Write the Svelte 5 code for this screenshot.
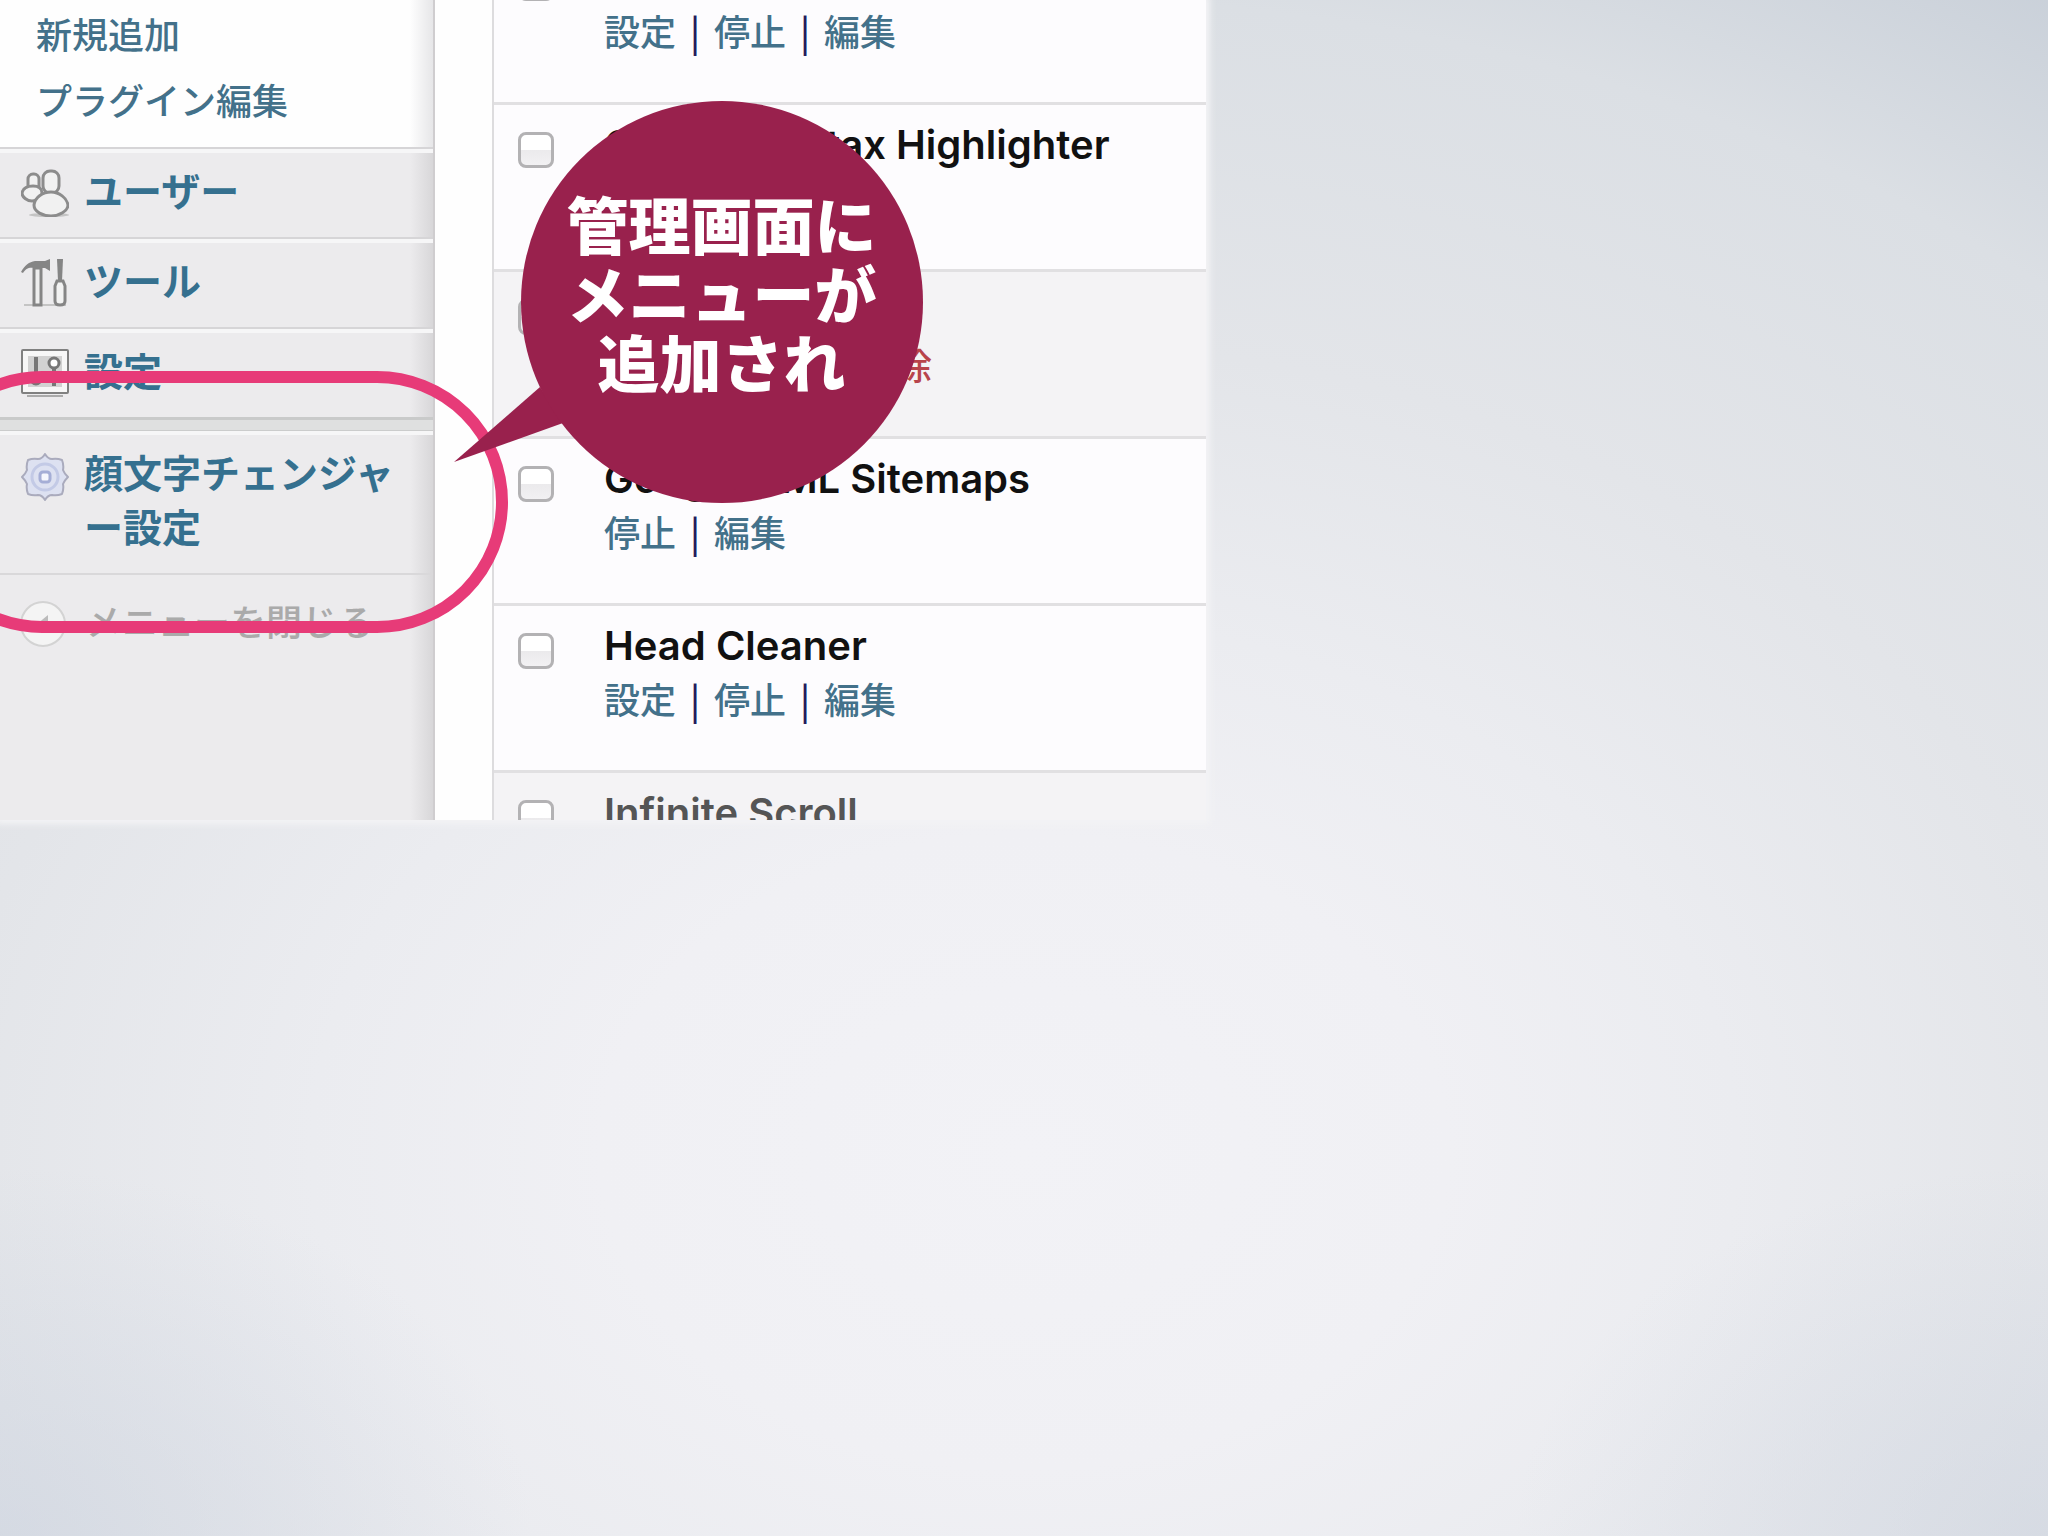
<script>
  const submenu = ['新規追加', 'プラグイン編集'];
  const menu = [
    { icon: 'users', label: 'ユーザー' },
    { icon: 'tools', label: 'ツール' },
    { icon: 'settings', label: '設定' }
  ];
  const plugins = [
    { name: '', active: true, actions: ['設定', '停止', '編集'] },
    { name: 'Google Syntax Highlighter', active: true, actions: [] },
    { name: '', active: false, actions: ['有効化', '編集', '削除'] },
    { name: 'Google XML Sitemaps', active: true, actions: ['停止', '編集'] },
    { name: 'Head Cleaner', active: true, actions: ['設定', '停止', '編集'] },
    { name: 'Infinite Scroll', active: false, actions: [] }
  ];
</script>

<main class="slide">
  <div class="screen">
    <nav class="sidebar">
      <div class="submenu">
        {#each submenu as item}<a href="#top">{item}</a>{/each}
      </div>
      {#each menu as item}
        <a class="item" href="#top">
          <svg class="icon" viewBox="0 0 48 48" aria-hidden="true">
            {#if item.icon === 'users'}
              <ellipse cx="28" cy="46" rx="20" ry="2" fill="#c4c4c4" />
              <g fill="#f1f1f1" stroke="#8c8c8c" stroke-width="3">
                <rect x="7" y="5" width="11" height="17" rx="5" />
                <path d="M1 24C2 19 6 17 12 17S21 20 21 24S16 32 11 32S1 28 1 24Z" />
                <rect x="22" y="2" width="16" height="22" rx="7" />
                <path d="M13 36C14 28 22 23 30 23S46 29 47 36C47 42 38 47 30 47S13 43 13 36Z" />
              </g>
            {:else if item.icon === 'tools'}
              <path d="M3 46H45" stroke="#c4c4c4" stroke-width="2" />
              <path d="M0 13C4 6 8 3 14 2H24L29 0V12L24 9H14C8 8 5 9 2 14Z" fill="#858585" />
              <path d="M13 9H20V46H13Z" fill="#eee" stroke="#858585" stroke-width="3" />
              <path d="M36 0H42L41 22H37Z" fill="#858585" />
              <path d="M36 22H42L44 27V42Q44 46 39 46T34 42V27Z" fill="#f2f2f2" stroke="#858585" stroke-width="3" />
            {:else}
              <path d="M6 47H42" stroke="#aaa" stroke-width="2" />
              <rect x="1" y="1" width="46" height="43" rx="1" fill="#f7f7f7" stroke="#808080" stroke-width="2" />
              <rect x="7" y="7" width="34" height="31" fill="#d2d2d2" />
              <path d="M15 8V35M33 18V37" stroke="#777" stroke-width="4" />
              <circle cx="33" cy="14" r="5" fill="#fff" stroke="#777" stroke-width="3" />
              <circle cx="15" cy="30" r="5" fill="#fff" stroke="#777" stroke-width="3" />
            {/if}
          </svg>
          <span>{item.label}</span>
        </a>
      {/each}
      <div class="divider"></div>
      <a class="item tall" href="#top">
        <svg class="icon" viewBox="0 0 48 48" aria-hidden="true">
          <path d="M24 1Q27 6 31 6Q36 5 41 7Q43 12 42 17Q43 20 47 24Q43 28 42 31Q43 36 41 41Q36 43 31 42Q27 42 24 47Q21 42 17 42Q12 43 7 41Q5 36 6 31Q5 28 1 24Q5 20 6 17Q5 12 7 7Q12 5 17 6Q21 6 24 1Z" fill="#dde1f1" stroke="#aaabbd" stroke-width="2" stroke-linejoin="round" />
          <circle cx="24" cy="24" r="13" fill="none" stroke="#c3cae6" stroke-width="3" />
          <rect x="19" y="19" width="10" height="10" rx="3" fill="#f6f7fd" stroke="#a5aed6" stroke-width="3" />
        </svg>
        <span>顔文字チェンジャー設定</span>
      </a>
      <button class="collapse" type="button">
        <svg class="icon" viewBox="0 0 48 48" aria-hidden="true">
          <circle cx="23" cy="24" r="22" fill="#f4f4f4" stroke="#d3d3d3" stroke-width="2" />
          <path d="M28 15V33L17 24Z" fill="#bbb" />
        </svg>
        <span>メニューを閉じる</span>
      </button>
    </nav>
    <div class="content">
      <table>
        <tbody>
          {#each plugins as plugin}
            <tr class:inactive={!plugin.active}>
              <td class="check"><input type="checkbox" aria-label={plugin.name || 'プラグインを選択'} /></td>
              <td class="info">
                <strong>{plugin.name}</strong>
                <div class="actions">
                  {#each plugin.actions as action, i}
                    {#if i > 0}<i>|</i>{/if}<a href="#top" class:delete={action === '削除'}>{action}</a>
                  {/each}
                </div>
              </td>
            </tr>
          {/each}
        </tbody>
      </table>
    </div>
  </div>

  <div class="ring"></div>
  <div class="callout">
    <svg viewBox="0 0 469 402" aria-hidden="true">
      <path d="M0 361L86 286L109 322Z" />
      <circle cx="268" cy="201" r="201" />
    </svg>
    <p>管理画面に<br />メニューが<br />追加され</p>
  </div>
</main>

<style>
  :global(body) { margin: 0; }
  .slide {
    position: relative;
    min-height: 100vh;
    overflow: hidden;
    font-family: 'Liberation Sans', 'Noto Sans CJK JP', sans-serif;
    background:
      radial-gradient(ellipse 26% 24% at 0% 100%, #ccd3df99, transparent),
      radial-gradient(ellipse 26% 24% at 100% 100%, #ccd3df88, transparent),
      radial-gradient(ellipse 94% 94% at 50% 75%, #f2f2f6 0%, #f0f0f4 22%, #ebecf0 37%, #e3e5e9 56%, #dbdfe4 80%, #c9d0d9 97%);
  }
  .screen {
    display: flex;
    width: 58.9%;
    height: 820px;
    overflow: hidden;
    background: #fefefe;
    box-shadow: 0 0 6px 4px #f3f3f5;
  }
  a { text-decoration: none; color: #43718a; }
  .sidebar {
    flex: none;
    box-sizing: border-box;
    width: 435px;
    border-right: 2px solid #cfcdcf;
    background: linear-gradient(to right, transparent 410px, #d6d5d7 435px), #ecebed;
    font-family: 'Noto Sans CJK JP', sans-serif;
  }
  .submenu {
    display: flex;
    flex-direction: column;
    height: 147px;
    padding-left: 36px;
    background: linear-gradient(to right, transparent 410px, #e4e4e6 435px), #fefefe;
    background-origin: border-box;
    font-size: 36px;
    font-weight: 500;
    line-height: 66px;
  }
  .item {
    display: flex;
    box-sizing: border-box;
    height: 90px;
    padding: 13px 30px 0 21px;
    gap: 15px;
    border-top: 2px solid #d6d5d7;
    box-shadow: inset 0 4px #f6f6f7;
    color: #35708f;
    font-size: 39px;
    font-weight: 700;
    line-height: 54px;
  }
  .icon {
    flex: none;
    width: 48px;
    height: 48px;
    margin-top: 7px;
  }
  .divider {
    height: 10px;
    border-top: 3px solid #c9caca;
    border-bottom: 1px solid #cbcccc;
    background: #dfe0e0;
  }
  .tall {
    height: 144px;
    border-top-width: 0;
    border-bottom: 2px solid #d9d8da;
  }
  .tall .icon { margin-top: 9px; }
  .collapse {
    display: flex;
    gap: 18px;
    width: 100%;
    padding: 18px 0 0 20px;
    border: 0;
    background: none;
    color: #aaa;
    font: 500 36px/54px 'Noto Sans CJK JP', sans-serif;
    white-space: nowrap;
  }
  .content {
    flex: 1;
    padding-left: 57px;
  }
  table {
    width: 100%;
    margin-top: -62px;
    border-left: 2px solid #dddcde;
    border-spacing: 0;
  }
  tr { background: #fdfcfe; }
  tr.inactive { background: #f4f3f5; }
  td {
    box-sizing: border-box;
    height: 167px;
    padding: 0;
    border-bottom: 3px solid #e1e0e2;
    vertical-align: top;
  }
  .check {
    width: 110px;
    padding: 27px 0 0 24px;
  }
  input {
    display: block;
    box-sizing: border-box;
    width: 36px;
    height: 36px;
    margin: 0;
    appearance: none;
    border: 3px solid #b3b2b4;
    border-radius: 8px;
    background: linear-gradient(#fff 50%, #ebeaec 50%, #f2f1f3);
  }
  strong {
    display: block;
    min-height: 54px;
    padding-top: 13px;
    color: #111;
    font: 600 40px/54px Inter, sans-serif;
  }
  .inactive strong { color: #555; }
  .actions {
    display: flex;
    color: #231c5c;
    font: 500 36px/50px 'Noto Sans CJK JP', sans-serif;
  }
  .actions i {
    width: 38px;
    text-align: center;
    font-style: normal;
  }
  .actions .delete { color: #b8444b; }
  .ring {
    position: absolute;
    box-sizing: border-box;
    top: 371px;
    left: -89px;
    width: 597px;
    height: 262px;
    border: 12px solid #e73b78;
    border-radius: 131px;
  }
  .callout {
    position: absolute;
    top: 101px;
    left: 454px;
    width: 469px;
    height: 402px;
  }
  .callout svg {
    display: block;
    fill: #99214d;
  }
  .callout p {
    position: absolute;
    inset: 88px 0 auto 66px;
    margin: 0;
    color: #fff;
    font: 900 62px/69px 'Noto Sans CJK JP', sans-serif;
    text-align: center;
  }
</style>
